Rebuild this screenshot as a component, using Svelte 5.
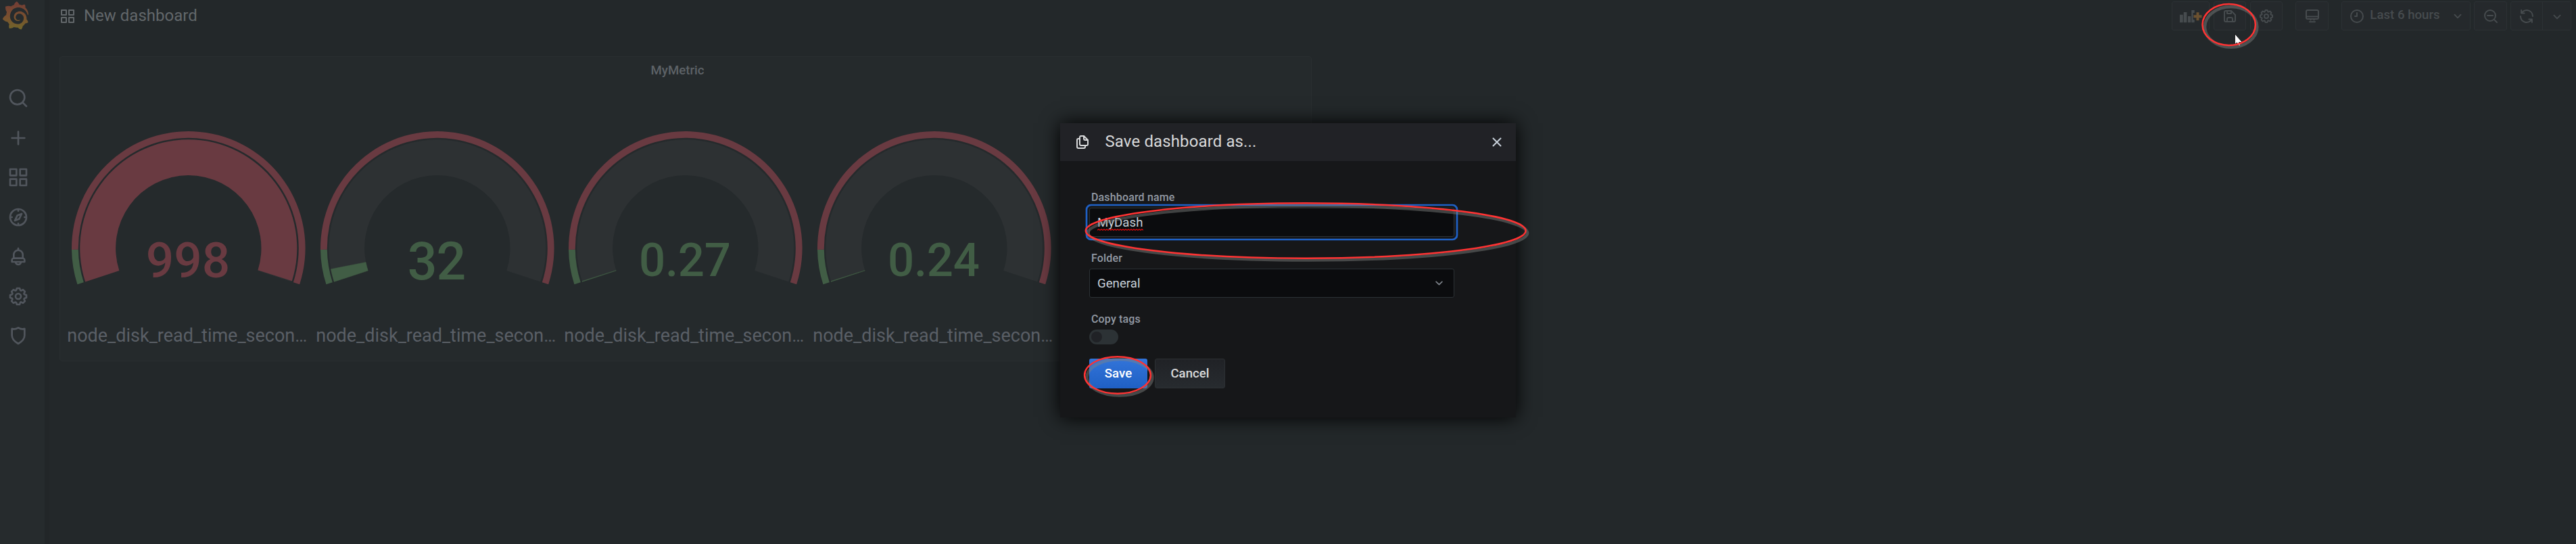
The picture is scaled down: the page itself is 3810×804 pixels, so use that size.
<script>
  const navIcons = ['search', 'plus', 'apps', 'compass', 'bell', 'cog', 'shield'];

  const gauges = [
    { text: '998', frac: 0.998, size: 73, base: 409.7, width: 124.5, red: true },
    { text: '32', frac: 0.032, size: 77, base: 413, width: 86.5, red: false },
    { text: '0.27', frac: 0.0015, size: 69, base: 408, width: 136, red: false },
    { text: '0.24', frac: 0.0015, size: 69, base: 408, width: 136, red: false }
  ];

  const CX = 183.8;
  const CY = 283.8;

  // Annular sector; fractions run along a 216 degree sweep.
  function sector(from, to, inner, outer) {
    const a = ((162 + from * 216) * Math.PI) / 180;
    const b = ((162 + to * 216) * Math.PI) / 180;
    const large = (to - from) * 216 > 180 ? 1 : 0;
    const p = (r, t) => `${(CX + r * Math.cos(t)).toFixed(2)} ${(CY + r * Math.sin(t)).toFixed(2)}`;
    return `M${p(outer, a)}A${outer} ${outer} 0 ${large} 1 ${p(outer, b)}L${p(inner, b)}A${inner} ${inner} 0 ${large} 0 ${p(inner, a)}Z`;
  }

  const cog =
    'M21.32,9.55l-1.89-.63.89-1.78A1,1,0,0,0,20.13,6L18,3.87a1,1,0,0,0-1.15-.19l-1.78.89-.63-1.89A1,1,0,0,0,13.5,2h-3a1,1,0,0,0-.95.68L8.92,4.57,7.14,3.68A1,1,0,0,0,6,3.87L3.87,6a1,1,0,0,0-.19,1.15l.89,1.78-1.89.63A1,1,0,0,0,2,10.5v3a1,1,0,0,0,.68.95l1.89.63-.89,1.78A1,1,0,0,0,3.87,18L6,20.13a1,1,0,0,0,1.15.19l1.78-.89.63,1.89a1,1,0,0,0,.95.68h3a1,1,0,0,0,.95-.68l.63-1.89,1.78.89A1,1,0,0,0,18,20.13L20.13,18a1,1,0,0,0,.19-1.15l-.89-1.78,1.89-.63A1,1,0,0,0,22,13.5v-3A1,1,0,0,0,21.32,9.55ZM20,12.78l-1.2.4A2,2,0,0,0,17.64,16l.57,1.14-1.1,1.1L16,17.64a2,2,0,0,0-2.79,1.16l-.4,1.2H11.22l-.4-1.2A2,2,0,0,0,8,17.64l-1.14.57-1.1-1.1L6.36,16A2,2,0,0,0,5.2,13.18L4,12.78V11.22l1.2-.4A2,2,0,0,0,6.36,8L5.79,6.89l1.1-1.1L8,6.36A2,2,0,0,0,10.82,5.2l.4-1.2h1.56l.4,1.2A2,2,0,0,0,16,6.36l1.14-.57,1.1,1.1L17.64,8a2,2,0,0,0,1.16,2.79l1.2.4ZM12,8a4,4,0,1,0,4,4A4,4,0,0,0,12,8Zm0,6a2,2,0,1,1,2-2A2,2,0,0,1,12,14Z';
  const bell =
    'M18,13.18V10a6,6,0,0,0-5-5.91V3a1,1,0,0,0-2,0V4.09A6,6,0,0,0,6,10v3.18A3,3,0,0,0,4,16v2a1,1,0,0,0,1,1H8.14a4,4,0,0,0,7.72,0H19a1,1,0,0,0,1-1V16A3,3,0,0,0,18,13.18ZM8,10a4,4,0,0,1,8,0v3H8Zm4,10a2,2,0,0,1-1.72-1h3.44A2,2,0,0,1,12,20Zm6-3H6V16a1,1,0,0,1,1-1H17a1,1,0,0,1,1,1Z';
  const save =
    'M20.71,9.29l-6-6a1,1,0,0,0-.32-.21A1.09,1.09,0,0,0,14,3H6A3,3,0,0,0,3,6V18a3,3,0,0,0,3,3H18a3,3,0,0,0,3-3V10A1,1,0,0,0,20.71,9.29ZM9,5h4V7H9Zm6,14H9V16a1,1,0,0,1,1-1h4a1,1,0,0,1,1,1Zm4-1a1,1,0,0,1-1,1H17V16a3,3,0,0,0-3-3H10a3,3,0,0,0-3,3v3H6a1,1,0,0,1-1-1V6A1,1,0,0,1,6,5H7V8A1,1,0,0,0,8,9h6a1,1,0,0,0,1-1V6.41l4,4Z';
  const sync =
    'M19.91,15.51H15.38a1,1,0,0,0,0,2h2.4A8,8,0,0,1,4,12a1,1,0,0,0-2,0,10,10,0,0,0,16.88,7.23V21a1,1,0,0,0,2,0V16.5A1,1,0,0,0,19.91,15.51ZM12,2A10,10,0,0,0,5.12,4.77V3a1,1,0,0,0-2,0V7.5a1,1,0,0,0,1,1h4.5a1,1,0,0,0,0-2H6.22A8,8,0,0,1,20,12a1,1,0,0,0,2,0A10,10,0,0,0,12,2Z';
  const copy =
    'M21,8.94a1.31,1.31,0,0,0-.06-.27l0-.09a1.07,1.07,0,0,0-.19-.28h0l-6-6h0a1.07,1.07,0,0,0-.28-.19.32.32,0,0,0-.09,0A.88.88,0,0,0,14.05,2H10A3,3,0,0,0,7,5V6H6A3,3,0,0,0,3,9V19a3,3,0,0,0,3,3h8a3,3,0,0,0,3-3V18h1a3,3,0,0,0,3-3V9S21,9,21,8.94ZM15,5.41,17.59,8H16a1,1,0,0,1-1-1ZM15,19a1,1,0,0,1-1,1H6a1,1,0,0,1-1-1V9A1,1,0,0,1,6,8H7v7a3,3,0,0,0,3,3h5Zm4-4a1,1,0,0,1-1,1H10a1,1,0,0,1-1-1V5a1,1,0,0,1,1-1h3V7a3,3,0,0,0,3,3h3Z';
  const solid = { cog, bell, save, sync, copy };

  const logo =
    'M342,161.2c-0.6-6.1-1.6-13.1-3.6-20.9c-2-7.7-5-16.2-9.4-25c-4.4-8.8-10.1-17.9-17.5-26.8c-2.9-3.5-6.1-6.9-9.5-10.2c5.1-20.3-6.2-37.9-6.2-37.9c-19.5-1.2-31.9,6.1-36.5,9.4c-0.8-0.3-1.5-0.7-2.3-1c-3.3-1.3-6.7-2.6-10.3-3.7c-3.5-1.1-7.1-2.1-10.8-3c-3.7-0.9-7.4-1.6-11.2-2.2c-0.7-0.1-1.3-0.2-2-0.3c-8.5-27.2-32.9-38.6-32.9-38.6c-27.3,17.3-32.4,41.5-32.4,41.5s-0.1,0.5-0.3,1.4c-1.5,0.4-3,0.9-4.5,1.3c-2.1,0.6-4.2,1.4-6.2,2.2c-2.1,0.8-4.1,1.6-6.2,2.5c-4.1,1.8-8.2,3.8-12.2,6c-3.9,2.2-7.7,4.6-11.4,7.1c-0.5-0.2-1-0.4-1-0.4c-37.8-14.4-71.3,2.9-71.3,2.9c-3.1,40.2,15.1,65.5,18.7,70.1c-0.9,2.5-1.7,5-2.5,7.5c-2.8,9.1-4.9,18.4-6.2,28.1c-0.2,1.4-0.4,2.8-0.5,4.2C18.8,192.7,8.5,228,8.5,228c29.1,33.5,63.1,35.6,63.1,35.6c0,0,0.1-0.1,0.1-0.1c4.3,7.7,9.3,15,14.9,21.9c2.4,2.9,4.8,5.6,7.4,8.3c-10.6,30.4,1.5,55.6,1.5,55.6c32.4,1.2,53.7-14.2,58.2-17.7c3.2,1.1,6.5,2.1,9.8,2.9c10,2.6,20.2,4.1,30.4,4.5c2.5,0.1,5.1,0.2,7.6,0.1l1.2,0l0.8,0l1.6,0l1.6-0.1l0,0.1c15.3,21.8,42.1,24.9,42.1,24.9c19.1-20.1,20.2-40.1,20.2-44.4l0-1.8c4-2.8,7.8-5.8,11.4-9.1c7.6-6.9,14.3-14.8,19.9-23.3c0.5-0.8,1-1.6,1.5-2.4c21.6,1.2,36.9-13.4,36.9-13.4c-3.6-22.5-16.4-33.5-19.1-35.6l-1-0.8c0.1-1.4,0.2-2.7,0.3-4.1c0.2-2.4,0.2-4.9,0.2-7.3l0-3.8l-0.2-3.5c0-0.7-0.1-1.3-0.2-1.9c-0.1-0.6-0.1-1.3-0.2-1.9l-0.2-1.9l-0.3-1.9c-0.4-2.5-0.8-4.9-1.4-7.4c-2.3-9.7-6.1-18.9-11-27.2c-5-8.3-11.2-15.6-18.3-21.8c-7-6.2-14.9-11.2-23.1-14.9c-8.3-3.7-16.9-6.1-25.5-7.2c-4.3-0.6-8.6-0.8-12.9-0.7l-3.2,0.1l-1.6,0.1c-0.6,0-1.2,0.1-1.7,0.1c-2.2,0.2-4.4,0.5-6.5,0.9c-8.6,1.6-16.7,4.7-23.8,9c-7.1,4.3-13.3,9.6-18.3,15.6c-5,6-8.9,12.7-11.6,19.6c-2.7,6.9-4.2,14.1-4.6,21c-0.1,1.7-0.1,3.5-0.1,5.2c0,0.4,0,0.9,0,1.3l0.1,1.4c0.1,0.8,0.1,1.7,0.2,2.5c0.3,3.5,1,6.9,1.9,10.1c1.9,6.5,4.9,12.4,8.6,17.4c3.7,5,8.2,9.1,12.9,12.4c4.7,3.2,9.8,5.5,14.8,7c5,1.5,10,2.1,14.7,2.1c2.5,0,5-0.3,7.3-0.6c1.1-0.2,2.2-0.4,3.3-0.7c1.1-0.2,2.1-0.6,3.1-0.9c2-0.7,4-1.5,5.7-2.4c1.8-0.9,3.4-2,5-3c0.4-0.3,0.9-0.6,1.3-1c1.6-1.3,1.9-3.7,0.6-5.3c-1.1-1.4-3.1-1.8-4.7-0.9c-0.4,0.2-0.8,0.4-1.2,0.6c-1.4,0.7-2.8,1.3-4.3,1.8c-1.5,0.5-3.1,0.9-4.7,1.2c-3,0.5-6,0.5-9,0.2c-3.7-0.5-7.4-1.6-10.9-3.2c-3.6-1.6-7-3.8-10.1-6.6c-3.1-2.8-5.8-6.1-7.9-9.9c-2.1-3.8-3.6-8-4.3-12.4c-0.3-2.2-0.5-4.5-0.4-6.7c0-2.4,0.4-4.7,0.7-7.1c1.7-9.6,6.5-19,13.9-26.1c1.9-1.8,3.9-3.4,6-4.9c2.1-1.5,4.4-2.8,6.8-3.9c2.4-1.1,4.8-2,7.4-2.7c2.5-0.7,5.1-1.1,7.8-1.4c1.3-0.1,2.6-0.2,4-0.2l3.8,0.1c2.9,0.2,5.7,0.6,8.5,1.3c5.6,1.2,11.1,3.3,16.2,6.1c10.2,5.7,18.9,14.5,24.2,25.1c2.7,5.3,4.6,11,5.5,16.9c0.2,1.5,0.4,3,0.5,4.5l0.2,4.4l0,2.1c0,0.7-0.1,1.9-0.1,2.6c-0.1,1.6-0.3,3.3-0.5,4.9c-0.2,1.6-0.5,3.2-0.8,4.8c-0.3,1.6-0.7,3.2-1.1,4.7c-0.8,3.1-1.8,6.2-3,9.3c-2.4,6-5.6,11.8-9.4,17.1c-7.7,10.6-18.2,19.2-30.2,24.7c-6,2.7-12.3,4.7-18.8,5.7c-3.2,0.6-6.5,0.9-9.8,1c-3.8,0.1-7,0-10.5-0.3c-7-0.5-13.9-1.8-20.7-3.7c-6.7-1.9-13.2-4.6-19.4-7.8c-12.3-6.6-23.4-15.6-32-26.5c-4.3-5.4-8.1-11.3-11.2-17.4c-3.1-6.1-5.6-12.6-7.4-19.1c-1.8-6.6-2.9-13.3-3.4-20.1c-0.2-3.5-0.2-6.5-0.1-9.7c0.1-3.3,0.4-6.8,0.8-10.2c0.4-3.4,1-6.9,1.7-10.3c0.7-3.4,1.5-6.8,2.5-10.2c1.9-6.7,4.3-13.2,7.1-19.3c5.7-12.2,13.1-23.1,22-31.8c2.2-2.2,4.5-4.2,6.9-6.2c2.4-1.9,4.9-3.7,7.5-5.4c2.5-1.7,5.2-3.2,7.9-4.6c1.3-0.7,2.7-1.4,4.1-2c4.2-1.8,8.4-3.5,12.9-4.9c4.3-1.2,8.8-2.4,13.5-3.3c5-0.9,10-1.5,15-1.8c4-0.2,8-0.3,12-0.1c5.8,0.2,11.5,0.9,17,1.9c11.1,2.1,21.5,5.6,31,10.3c9.5,4.6,17.9,10.3,25.3,16.5c3.5,3,6.9,6.2,10.2,9.7c3.1,3.3,6,6.6,8.6,10c5.2,6.7,9.4,13.5,12.7,19.9c1.3,2.6,2.7,5.5,4,8.2c1.2,3,2.4,5.9,3.3,8.6c1.5,4.4,2.6,8.3,3.5,11.7c0.3,1.4,1.6,2.3,3,2.1c1.5-0.1,2.6-1.3,2.6-2.8C342.6,170.4,342.5,166.1,342,161.2z';

  const squiggle = 'M0 2.2' + Array.from({ length: 17 }, (_, i) => `L${i * 4 + 2} .8L${i * 4 + 4} 2.2`).join('');

  const rings = [
    { cx: 3296.7, cy: 36.5, rx: 39.2, ry: 30.4 },
    { cx: 1931.2, cy: 341, rx: 325.4, ry: 40.7 },
    { cx: 1653, cy: 554.5, rx: 48.9, ry: 27.2 }
  ];
</script>

{#snippet icon(name, size)}
  <svg class="icon" width={size} height={size} viewBox="0 0 24 24">
    {#if solid[name]}
      <path d={solid[name]} fill="currentColor" />
    {:else}
      <g fill="none" stroke="currentColor" stroke-width="2" stroke-linecap="round" stroke-linejoin="round">
        {#if name === 'search'}
          <circle cx="11" cy="11" r="8" /><path d="M16.7 16.7L21 21" />
        {:else if name === 'zoom-out'}
          <circle cx="11" cy="11" r="8" /><path d="M16.7 16.7L21 21M7 11h8" />
        {:else if name === 'plus'}
          <path d="M12 5v14M5 12h14" />
        {:else if name === 'apps'}
          <path d="M3 3h7v7H3zM14 3h7v7h-7zM3 14h7v7H3zM14 14h7v7h-7z" />
        {:else if name === 'compass'}
          <circle cx="12" cy="12" r="9" />
          <path d="M12 3.5v1.5M12 19v1.5M3.5 12h1.5M19 12h1.5" />
          <path d="M15.8 8.2l-4.9 2-2.7 5.6 4.9-2z" />
        {:else if name === 'shield'}
          <path d="M12 3.2C9.8 4.6 7 5 5 4.4v7.4c0 4 2.6 6.600 7 9.2c4.400-2.600 7-5.200 7-9.2V4.400C17 5 14.200 4.600 12 3.200z" />
        {:else if name === 'monitor'}
          <path d="M5 3h14a2 2 0 0 1 2 2v9a2 2 0 0 1-2 2H5a2 2 0 0 1-2-2V5a2 2 0 0 1 2-2zM3 12.500h18M9.500 16v1.500M14.500 16v1.500M8 20.300h8" />
        {:else if name === 'clock'}
          <circle cx="12" cy="12" r="9" /><path d="M12 7v5H9" />
        {:else if name === 'chevron'}
          <path d="M7 9.500l5 5 5-5" />
        {:else if name === 'close'}
          <path d="M6.500 6.500l11 11M17.500 6.500l-11 11" />
        {/if}
      </g>
    {/if}
  </svg>
{/snippet}

<div class="page">
  <nav class="side">
    <svg class="logo" width="40" height="42" viewBox="0 0 351 365">
      <defs>
        <linearGradient id="flame" x1="0" y1="0" x2="0" y2="1">
          <stop offset="0.1" stop-color="#733f34" />
          <stop offset="0.55" stop-color="#78502f" />
          <stop offset="1" stop-color="#71662a" />
        </linearGradient>
      </defs>
      <path d={logo} fill="url(#flame)" />
    </svg>
    <div class="nav-list">
      {#each navIcons as name}
        <div class="nav-item">{@render icon(name, 32)}</div>
      {/each}
    </div>
  </nav>

  <main>
    <header>
      <div class="title">{@render icon('apps', 24)}<span>New dashboard</span></div>
      <div class="tools">
        <button class="btn add">
          <svg width="34" height="20" viewBox="0 0 34 20">
            <path d="M1 7.700h4.700v11.600H1zM6.700 4h4.700v15.300H6.700zM13 10h4.300v9.300H13zM18.300 1h4.400v4h-2v10h2v4.300h-4.400z" fill="#464b4e" />
            <path d="M25.500 4.300h4v4h4v4h-4v4h-4v-4h-4v-4h4z" fill="#6b5130" />
          </svg>
        </button>
        <button class="btn save-top">{@render icon('save', 24)}</button>
        <button class="btn gear">{@render icon('cog', 24)}</button>
        <button class="btn tv">{@render icon('monitor', 24)}</button>
        <button class="btn range">
          {@render icon('clock', 24)}<span>Last 6 hours</span>{@render icon('chevron', 22)}
        </button>
        <button class="btn zoom">{@render icon('zoom-out', 24)}</button>
        <div class="btn refresh">
          <span class="half">{@render icon('sync', 24)}</span>
          <span class="half more">{@render icon('chevron', 22)}</span>
        </div>
      </div>
    </header>

    <section class="panel">
      <h2>MyMetric</h2>
      <div class="gauges">
        {#each gauges as g}
          <svg width="367.6" height="448" viewBox="0 0 367.6 448">
            <path d={sector(0, 1, 107.7, 160.5)} fill="#2d3133" />
            <path d={sector(0, g.frac, 107.7, 160.5)} fill={g.red ? '#693a41' : '#415d45'} stroke={g.red ? 'none' : '#415d45'} stroke-width="0.4" />
            <path d={sector(0, 0.08, 163, 172.8)} fill="#415d45" />
            <path d={sector(0.08, 1, 163, 172.8)} fill="#693a41" />
            <text x={CX - 0.8} y={g.base - 83} text-anchor="middle" font-size={g.size} font-weight="500" textLength={g.width} fill={g.red ? '#693a41' : '#415d45'}>{g.text}</text>
            <text x="4.300" y="421.700" font-size="27" textLength="355" fill="#5a5f66">node_disk_read_time_secon…</text>
          </svg>
        {/each}
      </div>
    </section>
  </main>

  <div class="modal">
    <div class="modal-head">
      {@render icon('copy', 24)}
      <span class="modal-title">Save dashboard as...</span>
      <span class="close">{@render icon('close', 24)}</span>
    </div>
    <div class="modal-body">
      <div class="label">Dashboard name</div>
      <div class="field focus">
        <span class="typed">MyDash<svg width="68" height="3" viewBox="0 0 68 3"><path d={squiggle} fill="none" stroke="#e00b0b" stroke-width="1.200" /></svg></span>
      </div>
      <div class="label">Folder</div>
      <div class="field select"><span>General</span>{@render icon('chevron', 21)}</div>
      <div class="label">Copy tags</div>
      <div class="toggle"><i></i></div>
      <div class="actions">
        <button class="primary">Save</button>
        <button class="secondary">Cancel</button>
      </div>
    </div>
  </div>

  <svg class="marks" width="3810" height="804" viewBox="0 0 3810 804">
    <defs>
      <filter id="soft" x="-20%" y="-20%" width="140%" height="140%"><feGaussianBlur stdDeviation="0.7" /></filter>
    </defs>
    <path d="M3305.500 50v15.500l3-2.500 3.200 5 2-1-2.200-4.500h4.800z" fill="#fff" stroke="#0a0b0c" stroke-width="0.800" />
    {#each rings as r}
      <ellipse cx={r.cx + 3} cy={r.cy + 3.3} rx={r.rx - 0.5} ry={r.ry - 0.5} fill="none" stroke="#808280" stroke-opacity="0.45" stroke-width="4.500" filter="url(#soft)" />
      <ellipse cx={r.cx} cy={r.cy} rx={r.rx} ry={r.ry} fill="none" stroke="#ff3333" stroke-width="2.500" />
    {/each}
  </svg>
</div>

<style>
  :global(body) { background: #23282a; }
  .page {
    position: relative;
    display: flex;
    width: 3810px;
    height: 804px;
    overflow: hidden;
    background: #23282a;
    font-family: Roboto, sans-serif;
  }
  .page * { box-sizing: border-box; }
  .icon { display: block; flex: none; }
  button { font-family: inherit; margin: 0; }

  .side {
    width: 66px;
    flex: none;
    background: #262b2d;
    box-shadow: 7px 0 0 #222628;
    color: #51565d;
  }
  .logo { display: block; margin: 2px 0 0 3px; }
  .nav-list { padding: 72px 0 0 11px; }
  .nav-item { height: 58.500px; display: flex; align-items: center; }

  main { flex: 1; padding-left: 22px; }
  header { height: 83px; display: flex; justify-content: space-between; padding-right: 7px; }
  .title { display: flex; height: 47px; align-items: center; gap: 12px; color: #62676a; font-size: 24px; }
  .title span { position: relative; top: -0.500px; }
  .tools { display: flex; padding-top: 2px; }
  .btn {
    display: flex;
    height: 43px;
    align-items: center;
    justify-content: center;
    padding: 0;
    border: 1px solid #2c3134;
    border-radius: 3px;
    background: #25292c;
    color: #464b4e;
  }
  .add { width: 56px; }
  .save-top, .gear { width: 48px; margin-left: 6px; }
  .tv { width: 49px; margin-left: 19px; }
  .range {
    width: 191px;
    margin-left: 19px;
    justify-content: flex-start;
    padding-left: 10px;
    font-size: 18.670px;
    font-weight: 500;
  }
  .range span { margin: 0 15px 3px 7px; width: 104px; white-space: nowrap; }
  .zoom { width: 49px; margin-left: 5px; }
  .refresh { width: 90px; margin-left: 5px; }
  .half { display: flex; width: 47px; height: 41px; align-items: center; justify-content: center; border-right: 1px solid #2c3134; }
  .more { width: 41px; border: 0; padding-top: 2px; }

  .panel {
    width: 1852px;
    height: 451px;
    border: 1px solid #292e30;
    border-radius: 4px;
    background: #252a2c;
  }
  h2 { margin: 0; height: 0; padding: 9px 24px 0 0; line-height: 22px; font-size: 18.670px; font-weight: 500; text-align: center; color: #5d6267; }
  .gauges { display: flex; padding-left: 6px; margin-top: -10px; }

  .modal {
    position: absolute;
    left: 1568px;
    top: 182px;
    width: 674px;
    height: 435px;
    background: #161719;
    box-shadow: 0 0 27px #000;
  }
  .modal-head { display: flex; height: 56px; align-items: center; padding: 0 16px 0 21px; background: #212226; color: #d8d9da; }
  .modal-title { flex: 1; margin-left: 21.500px; font-size: 24px; letter-spacing: 0.120px; padding-bottom: 2px; }
  .close { color: #c7d0d9; }
  .modal-body { padding: 43px 91px 0 43px; }
  .label { height: 26px; margin: 0 0 0 3px; font-size: 16px; line-height: 21px; font-weight: 500; letter-spacing: 0.150px; color: #9299a3; }
  .field {
    display: flex;
    height: 43px;
    margin-bottom: 21px;
    align-items: center;
    padding: 0 11px;
    border: 1px solid #2c3235;
    border-radius: 3px;
    background: #0b0c0e;
    color: #c7d0d9;
    font-size: 18.670px;
  }
  .focus { box-shadow: 0 0 0 2.670px #161719, 0 0 0 5.330px #1f60c4; }
  .typed { position: relative; }
  .typed svg { position: absolute; left: 0; bottom: -1px; }
  .select { justify-content: space-between; }
  .select :global(svg) { color: #7b8087; }
  .toggle { width: 43px; height: 22px; border-radius: 11px; background: #2c3235; padding: 3px; }
  .toggle i { display: block; width: 16px; height: 16px; border-radius: 50%; background: #202226; }
  .actions { display: flex; gap: 11px; padding-top: 21px; }
  .actions button { height: 44px; padding: 0; border: 0; border-radius: 3px; font-size: 18.670px; font-weight: 500; }
  .primary { width: 86px; background: linear-gradient(#3274d9, #1f60c4); color: #fff; }
  .actions .secondary { width: 104px; border: 1px solid #2c3033; background: linear-gradient(#202226, #272b2f); color: #d8d9da; }

  .marks { position: absolute; left: 0; top: 0; }
</style>
